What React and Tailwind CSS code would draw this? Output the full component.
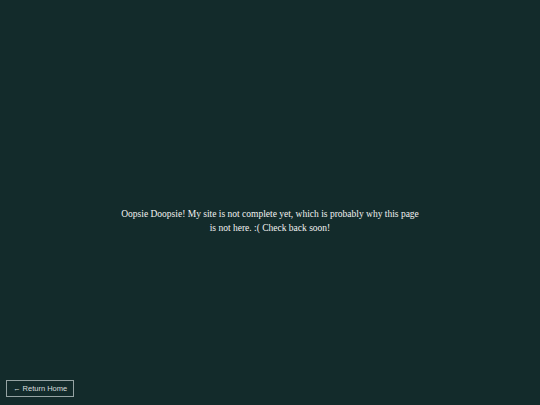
export default function App() {
  return (
    <div className="w-[540px] h-[405px] bg-[#132b2b] flex flex-col relative overflow-hidden">
      <div className="flex-1 flex items-center justify-center">
        <p className="w-[300px] text-center text-[9.5px] leading-[14px] text-[#f2f2f2] font-['Liberation_Serif',serif] mt-[62px]">
          Oopsie Doopsie! My site is not complete yet, which is probably why this page is not here. :( Check back soon!
        </p>
      </div>
      <div className="px-[6px] pb-[8px]">
        <button className="h-[17px] px-[6px] border border-[#95a3a3] text-[7.5px] leading-none text-[#d8dede] font-['Liberation_Sans',sans-serif] flex items-center">
          ← Return Home
        </button>
      </div>
    </div>
  );
}
